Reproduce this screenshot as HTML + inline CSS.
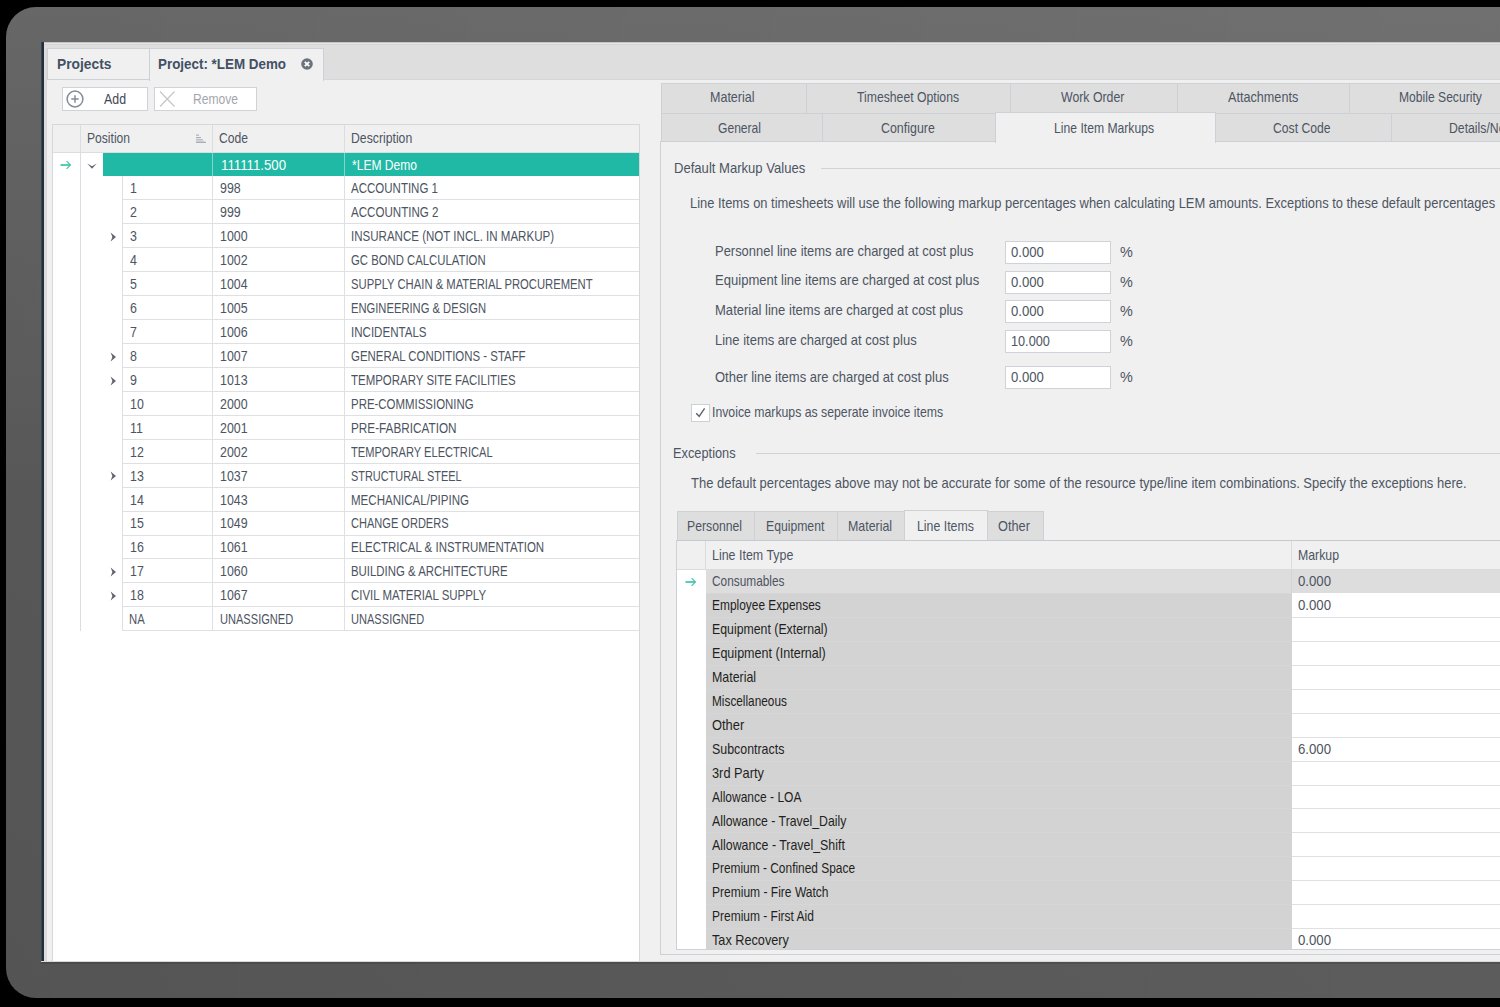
<!DOCTYPE html>
<html><head><meta charset="utf-8"><style>
html,body{margin:0;padding:0;}
body{width:1500px;height:1007px;overflow:hidden;background:#000;position:relative;font-family:"Liberation Sans",sans-serif;}
body div{position:absolute;box-sizing:border-box;}
.t{white-space:pre;line-height:15px;font-size:13px;}
</style></head><body>

<div style="left:6px;top:7px;width:1600px;height:991px;border-radius:30px;background:linear-gradient(to bottom,#717171 0%,#606060 50%,#5d5d5d 100%);"></div>
<div style="left:6px;top:7px;width:1600px;height:991px;border-radius:30px;background:linear-gradient(to right,rgba(0,0,0,0.095),rgba(0,0,0,0) 100%);"></div>
<div style="left:41px;top:42px;width:1459px;height:919px;background:#f0f0f0;"></div>
<div style="left:41px;top:42px;width:3px;height:919px;background:#262e3a;"></div>
<div style="left:41px;top:42px;width:1px;height:919px;background:#34465a;"></div>
<div style="left:41px;top:961px;width:1459px;height:1px;background:#d9d9d9;"></div>
<div style="left:41px;top:962px;width:1459px;height:2px;background:rgba(0,0,0,0.12);"></div>
<div style="left:44px;top:42px;width:1456px;height:6px;background:#dedede;"></div>
<div style="left:44px;top:42px;width:1456px;height:1px;background:#c4c4c4;"></div>
<div style="left:44px;top:43px;width:1456px;height:1px;background:#e6e6e6;"></div>
<div style="left:44px;top:44px;width:1456px;height:1px;background:#d3d5d9;"></div>
<div style="left:44px;top:48px;width:3px;height:913px;background:#dcdcdc;"></div>
<div style="left:46px;top:48px;width:1px;height:913px;background:#d8d9dc;"></div>
<div style="left:47px;top:48px;width:1453px;height:32px;background:#dedede;"></div>
<div style="left:47px;top:79px;width:1453px;height:1px;background:#d3d6da;"></div>
<div style="left:47px;top:48px;width:103px;height:32px;background:#f0f0f0;border:1px solid #cdd0d5;"></div>
<div style="left:149px;top:48px;width:175px;height:33px;background:#f0f0f0;border:1px solid #cdd0d5;border-bottom:none;"></div>
<div class="t" style="left:57.00px;top:57px;color:#435064;font-size:13.75px;font-weight:bold;transform:scaleX(1.0049);transform-origin:0 0;">Projects</div>
<div class="t" style="left:158.00px;top:57px;color:#435064;font-size:13.75px;font-weight:bold;transform:scaleX(0.9743);transform-origin:0 0;">Project: *LEM Demo</div>
<svg style="position:absolute;left:301px;top:58px" width="12" height="12" viewBox="0 0 12 12"><circle cx="6" cy="6" r="5.8" fill="#6c737d"/><path d="M3.8 3.8L8.2 8.2M8.2 3.8L3.8 8.2" stroke="#fff" stroke-width="1.8"/></svg>
<div style="left:62px;top:87px;width:86px;height:24px;background:#fff;border:1px solid #cfd2d7;"></div>
<svg style="position:absolute;left:66px;top:90px" width="18" height="18" viewBox="0 0 18 18"><circle cx="9" cy="9" r="7.9" fill="none" stroke="#848b97" stroke-width="1.5"/><path d="M5.3 9H12.7M9 5.3V12.7" stroke="#848b97" stroke-width="1.5"/></svg>
<div class="t" style="left:104.00px;top:92px;color:#3f4756;font-size:13.75px;font-weight:normal;transform:scaleX(0.8997);transform-origin:0 0;">Add</div>
<div style="left:154px;top:87px;width:103px;height:24px;background:#fff;border:1px solid #cfd2d7;"></div>
<svg style="position:absolute;left:159px;top:91px" width="16" height="16" viewBox="0 0 16 16"><path d="M1 0.5L15.5 15.5M15.5 0.5L1 15.5" stroke="#c4c4c4" stroke-width="1.1"/></svg>
<div class="t" style="left:192.50px;top:92px;color:#a3a6ae;font-size:13.75px;font-weight:normal;transform:scaleX(0.8791);transform-origin:0 0;">Remove</div>
<div style="left:52px;top:124px;width:588px;height:837px;background:#fff;border-left:1px solid #d5d7da;border-top:1px solid #d5d7da;border-right:1px solid #d5d7da;"></div>
<div style="left:53px;top:125px;width:586px;height:27px;background:#f0f0f0;"></div>
<div style="left:53px;top:152px;width:586px;height:1px;background:#dcdde0;"></div>
<div style="left:80px;top:125px;width:1px;height:28px;background:#dcdde0;"></div>
<div style="left:212px;top:125px;width:1px;height:28px;background:#dcdde0;"></div>
<div style="left:344px;top:125px;width:1px;height:28px;background:#dcdde0;"></div>
<div class="t" style="left:87.00px;top:131px;color:#4d5563;font-size:13.75px;font-weight:normal;transform:scaleX(0.8792);transform-origin:0 0;">Position</div>
<div class="t" style="left:219.00px;top:131px;color:#4d5563;font-size:13.75px;font-weight:normal;transform:scaleX(0.8825);transform-origin:0 0;">Code</div>
<div class="t" style="left:351.00px;top:131px;color:#4d5563;font-size:13.75px;font-weight:normal;transform:scaleX(0.89);transform-origin:0 0;">Description</div>
<svg style="position:absolute;left:196px;top:134px" width="11" height="10" viewBox="0 0 11 10"><rect x="0" y="0.5" width="3" height="1.2" fill="#a9aeb6"/><rect x="0" y="3" width="5" height="1.2" fill="#a9aeb6"/><rect x="0" y="5.3" width="7" height="1.2" fill="#a9aeb6"/><rect x="0" y="6.5" width="8" height="1.3" fill="#d3d5da"/><rect x="0" y="7.7" width="10" height="1.3" fill="#a9aeb6"/></svg>
<div style="left:80px;top:153px;width:1px;height:478px;background:#dcdde0;"></div>
<div style="left:103px;top:153px;width:536px;height:23px;background:#20b9a5;"></div>
<div style="left:212px;top:153px;width:1px;height:23px;background:#7fd6ca;"></div>
<div style="left:344px;top:153px;width:1px;height:23px;background:#7fd6ca;"></div>
<div class="t" style="left:220.50px;top:158px;color:#ffffff;font-size:13.75px;font-weight:normal;transform:scaleX(0.963);transform-origin:0 0;">111111.500</div>
<div class="t" style="left:352.00px;top:158px;color:#ffffff;font-size:13.75px;font-weight:normal;transform:scaleX(0.8773);transform-origin:0 0;">*LEM Demo</div>
<svg style="position:absolute;left:60px;top:160px" width="12" height="10" viewBox="0 0 12 10"><path d="M0.5 5H10.3" fill="none" stroke="#33bea5" stroke-width="1.6"/><path d="M6.6 1.2L10.4 5L6.6 8.8" fill="none" stroke="#45c4ad" stroke-width="1.2"/></svg>
<svg style="position:absolute;left:87px;top:163px" width="10" height="7" viewBox="0 0 10 7"><path d="M0.3 0.5L5 5.8L9.7 0.5L5 3.2Z" fill="#5f6570"/></svg>
<div style="left:123px;top:199px;width:516px;height:1px;background:#dfe0e3;"></div>
<div style="left:122px;top:176px;width:1px;height:24px;background:#dfe0e3;"></div>
<div style="left:212px;top:176px;width:1px;height:24px;background:#dfe0e3;"></div>
<div style="left:344px;top:176px;width:1px;height:24px;background:#dfe0e3;"></div>
<div class="t" style="left:130.00px;top:181px;color:#4d5461;font-size:13.75px;font-weight:normal;transform:scaleX(0.9);transform-origin:0 0;">1</div>
<div class="t" style="left:219.50px;top:181px;color:#4d5461;font-size:13.75px;font-weight:normal;transform:scaleX(0.9);transform-origin:0 0;">998</div>
<div class="t" style="left:351.40px;top:181px;color:#4d5461;font-size:13.75px;font-weight:normal;transform:scaleX(0.8373);transform-origin:0 0;">ACCOUNTING 1</div>
<div style="left:123px;top:223px;width:516px;height:1px;background:#dfe0e3;"></div>
<div style="left:122px;top:200px;width:1px;height:24px;background:#dfe0e3;"></div>
<div style="left:212px;top:200px;width:1px;height:24px;background:#dfe0e3;"></div>
<div style="left:344px;top:200px;width:1px;height:24px;background:#dfe0e3;"></div>
<div class="t" style="left:130.00px;top:205px;color:#4d5461;font-size:13.75px;font-weight:normal;transform:scaleX(0.9);transform-origin:0 0;">2</div>
<div class="t" style="left:219.50px;top:205px;color:#4d5461;font-size:13.75px;font-weight:normal;transform:scaleX(0.9);transform-origin:0 0;">999</div>
<div class="t" style="left:351.40px;top:205px;color:#4d5461;font-size:13.75px;font-weight:normal;transform:scaleX(0.8421);transform-origin:0 0;">ACCOUNTING 2</div>
<div style="left:123px;top:247px;width:516px;height:1px;background:#dfe0e3;"></div>
<div style="left:122px;top:224px;width:1px;height:24px;background:#dfe0e3;"></div>
<div style="left:212px;top:224px;width:1px;height:24px;background:#dfe0e3;"></div>
<div style="left:344px;top:224px;width:1px;height:24px;background:#dfe0e3;"></div>
<div class="t" style="left:130.00px;top:229px;color:#4d5461;font-size:13.75px;font-weight:normal;transform:scaleX(0.9);transform-origin:0 0;">3</div>
<div class="t" style="left:219.50px;top:229px;color:#4d5461;font-size:13.75px;font-weight:normal;transform:scaleX(0.9);transform-origin:0 0;">1000</div>
<div class="t" style="left:351.40px;top:229px;color:#4d5461;font-size:13.75px;font-weight:normal;transform:scaleX(0.8391);transform-origin:0 0;">INSURANCE (NOT INCL. IN MARKUP)</div>
<svg style="position:absolute;left:110px;top:232px" width="7" height="10" viewBox="0 0 7 10"><path d="M0.6 0.6L6 5L0.6 9.4L2.4 5Z" fill="#5f6670"/></svg>
<div style="left:123px;top:271px;width:516px;height:1px;background:#dfe0e3;"></div>
<div style="left:122px;top:248px;width:1px;height:24px;background:#dfe0e3;"></div>
<div style="left:212px;top:248px;width:1px;height:24px;background:#dfe0e3;"></div>
<div style="left:344px;top:248px;width:1px;height:24px;background:#dfe0e3;"></div>
<div class="t" style="left:130.00px;top:253px;color:#4d5461;font-size:13.75px;font-weight:normal;transform:scaleX(0.9);transform-origin:0 0;">4</div>
<div class="t" style="left:219.50px;top:253px;color:#4d5461;font-size:13.75px;font-weight:normal;transform:scaleX(0.9);transform-origin:0 0;">1002</div>
<div class="t" style="left:351.40px;top:253px;color:#4d5461;font-size:13.75px;font-weight:normal;transform:scaleX(0.8245);transform-origin:0 0;">GC BOND CALCULATION</div>
<div style="left:123px;top:295px;width:516px;height:1px;background:#dfe0e3;"></div>
<div style="left:122px;top:272px;width:1px;height:24px;background:#dfe0e3;"></div>
<div style="left:212px;top:272px;width:1px;height:24px;background:#dfe0e3;"></div>
<div style="left:344px;top:272px;width:1px;height:24px;background:#dfe0e3;"></div>
<div class="t" style="left:130.00px;top:277px;color:#4d5461;font-size:13.75px;font-weight:normal;transform:scaleX(0.9);transform-origin:0 0;">5</div>
<div class="t" style="left:219.50px;top:277px;color:#4d5461;font-size:13.75px;font-weight:normal;transform:scaleX(0.9);transform-origin:0 0;">1004</div>
<div class="t" style="left:351.40px;top:277px;color:#4d5461;font-size:13.75px;font-weight:normal;transform:scaleX(0.8184);transform-origin:0 0;">SUPPLY CHAIN &amp; MATERIAL PROCUREMENT</div>
<div style="left:123px;top:319px;width:516px;height:1px;background:#dfe0e3;"></div>
<div style="left:122px;top:296px;width:1px;height:24px;background:#dfe0e3;"></div>
<div style="left:212px;top:296px;width:1px;height:24px;background:#dfe0e3;"></div>
<div style="left:344px;top:296px;width:1px;height:24px;background:#dfe0e3;"></div>
<div class="t" style="left:130.00px;top:301px;color:#4d5461;font-size:13.75px;font-weight:normal;transform:scaleX(0.9);transform-origin:0 0;">6</div>
<div class="t" style="left:219.50px;top:301px;color:#4d5461;font-size:13.75px;font-weight:normal;transform:scaleX(0.9);transform-origin:0 0;">1005</div>
<div class="t" style="left:351.40px;top:301px;color:#4d5461;font-size:13.75px;font-weight:normal;transform:scaleX(0.8143);transform-origin:0 0;">ENGINEERING &amp; DESIGN</div>
<div style="left:123px;top:343px;width:516px;height:1px;background:#dfe0e3;"></div>
<div style="left:122px;top:320px;width:1px;height:24px;background:#dfe0e3;"></div>
<div style="left:212px;top:320px;width:1px;height:24px;background:#dfe0e3;"></div>
<div style="left:344px;top:320px;width:1px;height:24px;background:#dfe0e3;"></div>
<div class="t" style="left:130.00px;top:325px;color:#4d5461;font-size:13.75px;font-weight:normal;transform:scaleX(0.9);transform-origin:0 0;">7</div>
<div class="t" style="left:219.50px;top:325px;color:#4d5461;font-size:13.75px;font-weight:normal;transform:scaleX(0.9);transform-origin:0 0;">1006</div>
<div class="t" style="left:351.40px;top:325px;color:#4d5461;font-size:13.75px;font-weight:normal;transform:scaleX(0.8407);transform-origin:0 0;">INCIDENTALS</div>
<div style="left:123px;top:367px;width:516px;height:1px;background:#dfe0e3;"></div>
<div style="left:122px;top:344px;width:1px;height:24px;background:#dfe0e3;"></div>
<div style="left:212px;top:344px;width:1px;height:24px;background:#dfe0e3;"></div>
<div style="left:344px;top:344px;width:1px;height:24px;background:#dfe0e3;"></div>
<div class="t" style="left:130.00px;top:349px;color:#4d5461;font-size:13.75px;font-weight:normal;transform:scaleX(0.9);transform-origin:0 0;">8</div>
<div class="t" style="left:219.50px;top:349px;color:#4d5461;font-size:13.75px;font-weight:normal;transform:scaleX(0.9);transform-origin:0 0;">1007</div>
<div class="t" style="left:351.40px;top:349px;color:#4d5461;font-size:13.75px;font-weight:normal;transform:scaleX(0.8311);transform-origin:0 0;">GENERAL CONDITIONS - STAFF</div>
<svg style="position:absolute;left:110px;top:352px" width="7" height="10" viewBox="0 0 7 10"><path d="M0.6 0.6L6 5L0.6 9.4L2.4 5Z" fill="#5f6670"/></svg>
<div style="left:123px;top:391px;width:516px;height:1px;background:#dfe0e3;"></div>
<div style="left:122px;top:368px;width:1px;height:24px;background:#dfe0e3;"></div>
<div style="left:212px;top:368px;width:1px;height:24px;background:#dfe0e3;"></div>
<div style="left:344px;top:368px;width:1px;height:24px;background:#dfe0e3;"></div>
<div class="t" style="left:130.00px;top:373px;color:#4d5461;font-size:13.75px;font-weight:normal;transform:scaleX(0.9);transform-origin:0 0;">9</div>
<div class="t" style="left:219.50px;top:373px;color:#4d5461;font-size:13.75px;font-weight:normal;transform:scaleX(0.9);transform-origin:0 0;">1013</div>
<div class="t" style="left:351.40px;top:373px;color:#4d5461;font-size:13.75px;font-weight:normal;transform:scaleX(0.8339);transform-origin:0 0;">TEMPORARY SITE FACILITIES</div>
<svg style="position:absolute;left:110px;top:376px" width="7" height="10" viewBox="0 0 7 10"><path d="M0.6 0.6L6 5L0.6 9.4L2.4 5Z" fill="#5f6670"/></svg>
<div style="left:123px;top:415px;width:516px;height:1px;background:#dfe0e3;"></div>
<div style="left:122px;top:391px;width:1px;height:25px;background:#dfe0e3;"></div>
<div style="left:212px;top:391px;width:1px;height:25px;background:#dfe0e3;"></div>
<div style="left:344px;top:391px;width:1px;height:25px;background:#dfe0e3;"></div>
<div class="t" style="left:130.00px;top:397px;color:#4d5461;font-size:13.75px;font-weight:normal;transform:scaleX(0.9);transform-origin:0 0;">10</div>
<div class="t" style="left:219.50px;top:397px;color:#4d5461;font-size:13.75px;font-weight:normal;transform:scaleX(0.9);transform-origin:0 0;">2000</div>
<div class="t" style="left:351.40px;top:397px;color:#4d5461;font-size:13.75px;font-weight:normal;transform:scaleX(0.8316);transform-origin:0 0;">PRE-COMMISSIONING</div>
<div style="left:123px;top:439px;width:516px;height:1px;background:#dfe0e3;"></div>
<div style="left:122px;top:415px;width:1px;height:25px;background:#dfe0e3;"></div>
<div style="left:212px;top:415px;width:1px;height:25px;background:#dfe0e3;"></div>
<div style="left:344px;top:415px;width:1px;height:25px;background:#dfe0e3;"></div>
<div class="t" style="left:130.00px;top:421px;color:#4d5461;font-size:13.75px;font-weight:normal;transform:scaleX(0.9);transform-origin:0 0;">11</div>
<div class="t" style="left:219.50px;top:421px;color:#4d5461;font-size:13.75px;font-weight:normal;transform:scaleX(0.9);transform-origin:0 0;">2001</div>
<div class="t" style="left:351.40px;top:421px;color:#4d5461;font-size:13.75px;font-weight:normal;transform:scaleX(0.8548);transform-origin:0 0;">PRE-FABRICATION</div>
<div style="left:123px;top:463px;width:516px;height:1px;background:#dfe0e3;"></div>
<div style="left:122px;top:439px;width:1px;height:25px;background:#dfe0e3;"></div>
<div style="left:212px;top:439px;width:1px;height:25px;background:#dfe0e3;"></div>
<div style="left:344px;top:439px;width:1px;height:25px;background:#dfe0e3;"></div>
<div class="t" style="left:130.00px;top:445px;color:#4d5461;font-size:13.75px;font-weight:normal;transform:scaleX(0.9);transform-origin:0 0;">12</div>
<div class="t" style="left:219.50px;top:445px;color:#4d5461;font-size:13.75px;font-weight:normal;transform:scaleX(0.9);transform-origin:0 0;">2002</div>
<div class="t" style="left:351.40px;top:445px;color:#4d5461;font-size:13.75px;font-weight:normal;transform:scaleX(0.808);transform-origin:0 0;">TEMPORARY ELECTRICAL</div>
<div style="left:123px;top:487px;width:516px;height:1px;background:#dfe0e3;"></div>
<div style="left:122px;top:463px;width:1px;height:25px;background:#dfe0e3;"></div>
<div style="left:212px;top:463px;width:1px;height:25px;background:#dfe0e3;"></div>
<div style="left:344px;top:463px;width:1px;height:25px;background:#dfe0e3;"></div>
<div class="t" style="left:130.00px;top:469px;color:#4d5461;font-size:13.75px;font-weight:normal;transform:scaleX(0.9);transform-origin:0 0;">13</div>
<div class="t" style="left:219.50px;top:469px;color:#4d5461;font-size:13.75px;font-weight:normal;transform:scaleX(0.9);transform-origin:0 0;">1037</div>
<div class="t" style="left:351.40px;top:469px;color:#4d5461;font-size:13.75px;font-weight:normal;transform:scaleX(0.7937);transform-origin:0 0;">STRUCTURAL STEEL</div>
<svg style="position:absolute;left:110px;top:471px" width="7" height="10" viewBox="0 0 7 10"><path d="M0.6 0.6L6 5L0.6 9.4L2.4 5Z" fill="#5f6670"/></svg>
<div style="left:123px;top:511px;width:516px;height:1px;background:#dfe0e3;"></div>
<div style="left:122px;top:487px;width:1px;height:25px;background:#dfe0e3;"></div>
<div style="left:212px;top:487px;width:1px;height:25px;background:#dfe0e3;"></div>
<div style="left:344px;top:487px;width:1px;height:25px;background:#dfe0e3;"></div>
<div class="t" style="left:130.00px;top:493px;color:#4d5461;font-size:13.75px;font-weight:normal;transform:scaleX(0.9);transform-origin:0 0;">14</div>
<div class="t" style="left:219.50px;top:493px;color:#4d5461;font-size:13.75px;font-weight:normal;transform:scaleX(0.9);transform-origin:0 0;">1043</div>
<div class="t" style="left:351.40px;top:493px;color:#4d5461;font-size:13.75px;font-weight:normal;transform:scaleX(0.8394);transform-origin:0 0;">MECHANICAL/PIPING</div>
<div style="left:123px;top:535px;width:516px;height:1px;background:#dfe0e3;"></div>
<div style="left:122px;top:511px;width:1px;height:25px;background:#dfe0e3;"></div>
<div style="left:212px;top:511px;width:1px;height:25px;background:#dfe0e3;"></div>
<div style="left:344px;top:511px;width:1px;height:25px;background:#dfe0e3;"></div>
<div class="t" style="left:130.00px;top:516px;color:#4d5461;font-size:13.75px;font-weight:normal;transform:scaleX(0.9);transform-origin:0 0;">15</div>
<div class="t" style="left:219.50px;top:516px;color:#4d5461;font-size:13.75px;font-weight:normal;transform:scaleX(0.9);transform-origin:0 0;">1049</div>
<div class="t" style="left:351.40px;top:516px;color:#4d5461;font-size:13.75px;font-weight:normal;transform:scaleX(0.8033);transform-origin:0 0;">CHANGE ORDERS</div>
<div style="left:123px;top:558px;width:516px;height:1px;background:#dfe0e3;"></div>
<div style="left:122px;top:535px;width:1px;height:24px;background:#dfe0e3;"></div>
<div style="left:212px;top:535px;width:1px;height:24px;background:#dfe0e3;"></div>
<div style="left:344px;top:535px;width:1px;height:24px;background:#dfe0e3;"></div>
<div class="t" style="left:130.00px;top:540px;color:#4d5461;font-size:13.75px;font-weight:normal;transform:scaleX(0.9);transform-origin:0 0;">16</div>
<div class="t" style="left:219.50px;top:540px;color:#4d5461;font-size:13.75px;font-weight:normal;transform:scaleX(0.9);transform-origin:0 0;">1061</div>
<div class="t" style="left:351.40px;top:540px;color:#4d5461;font-size:13.75px;font-weight:normal;transform:scaleX(0.8354);transform-origin:0 0;">ELECTRICAL &amp; INSTRUMENTATION</div>
<div style="left:123px;top:582px;width:516px;height:1px;background:#dfe0e3;"></div>
<div style="left:122px;top:559px;width:1px;height:24px;background:#dfe0e3;"></div>
<div style="left:212px;top:559px;width:1px;height:24px;background:#dfe0e3;"></div>
<div style="left:344px;top:559px;width:1px;height:24px;background:#dfe0e3;"></div>
<div class="t" style="left:130.00px;top:564px;color:#4d5461;font-size:13.75px;font-weight:normal;transform:scaleX(0.9);transform-origin:0 0;">17</div>
<div class="t" style="left:219.50px;top:564px;color:#4d5461;font-size:13.75px;font-weight:normal;transform:scaleX(0.9);transform-origin:0 0;">1060</div>
<div class="t" style="left:351.40px;top:564px;color:#4d5461;font-size:13.75px;font-weight:normal;transform:scaleX(0.8297);transform-origin:0 0;">BUILDING &amp; ARCHITECTURE</div>
<svg style="position:absolute;left:110px;top:567px" width="7" height="10" viewBox="0 0 7 10"><path d="M0.6 0.6L6 5L0.6 9.4L2.4 5Z" fill="#5f6670"/></svg>
<div style="left:123px;top:606px;width:516px;height:1px;background:#dfe0e3;"></div>
<div style="left:122px;top:583px;width:1px;height:24px;background:#dfe0e3;"></div>
<div style="left:212px;top:583px;width:1px;height:24px;background:#dfe0e3;"></div>
<div style="left:344px;top:583px;width:1px;height:24px;background:#dfe0e3;"></div>
<div class="t" style="left:130.00px;top:588px;color:#4d5461;font-size:13.75px;font-weight:normal;transform:scaleX(0.9);transform-origin:0 0;">18</div>
<div class="t" style="left:219.50px;top:588px;color:#4d5461;font-size:13.75px;font-weight:normal;transform:scaleX(0.9);transform-origin:0 0;">1067</div>
<div class="t" style="left:351.40px;top:588px;color:#4d5461;font-size:13.75px;font-weight:normal;transform:scaleX(0.8335);transform-origin:0 0;">CIVIL MATERIAL SUPPLY</div>
<svg style="position:absolute;left:110px;top:591px" width="7" height="10" viewBox="0 0 7 10"><path d="M0.6 0.6L6 5L0.6 9.4L2.4 5Z" fill="#5f6670"/></svg>
<div style="left:123px;top:630px;width:516px;height:1px;background:#dfe0e3;"></div>
<div style="left:122px;top:607px;width:1px;height:24px;background:#dfe0e3;"></div>
<div style="left:212px;top:607px;width:1px;height:24px;background:#dfe0e3;"></div>
<div style="left:344px;top:607px;width:1px;height:24px;background:#dfe0e3;"></div>
<div class="t" style="left:129.00px;top:612px;color:#4d5461;font-size:13.75px;font-weight:normal;transform:scaleX(0.82);transform-origin:0 0;">NA</div>
<div class="t" style="left:219.50px;top:612px;color:#4d5461;font-size:13.75px;font-weight:normal;transform:scaleX(0.8049);transform-origin:0 0;">UNASSIGNED</div>
<div class="t" style="left:351.40px;top:612px;color:#4d5461;font-size:13.75px;font-weight:normal;transform:scaleX(0.8049);transform-origin:0 0;">UNASSIGNED</div>
<div style="left:660px;top:141px;width:840px;height:814px;background:#f0f0f0;border-left:1px solid #cdd0d5;border-bottom:1px solid #cdd0d5;border-top:1px solid #cdd0d5;"></div>
<div style="left:661px;top:83px;width:146px;height:31px;background:#dedede;border:1px solid #cdd0d5;"></div>
<div class="t" style="left:710.05px;top:90px;color:#4d5563;font-size:13.75px;font-weight:normal;transform:scaleX(0.9102);transform-origin:0 0;">Material</div>
<div style="left:806px;top:83px;width:205px;height:31px;background:#dedede;border:1px solid #cdd0d5;"></div>
<div class="t" style="left:856.90px;top:90px;color:#4d5563;font-size:13.75px;font-weight:normal;transform:scaleX(0.8883);transform-origin:0 0;">Timesheet Options</div>
<div style="left:1010px;top:83px;width:168px;height:31px;background:#dedede;border:1px solid #cdd0d5;"></div>
<div class="t" style="left:1061.00px;top:90px;color:#4d5563;font-size:13.75px;font-weight:normal;transform:scaleX(0.8959);transform-origin:0 0;">Work Order</div>
<div style="left:1177px;top:83px;width:173px;height:31px;background:#dedede;border:1px solid #cdd0d5;"></div>
<div class="t" style="left:1227.50px;top:90px;color:#4d5563;font-size:13.75px;font-weight:normal;transform:scaleX(0.9191);transform-origin:0 0;">Attachments</div>
<div style="left:1349px;top:83px;width:183px;height:31px;background:#dedede;border:1px solid #cdd0d5;"></div>
<div class="t" style="left:1399.20px;top:90px;color:#4d5563;font-size:13.75px;font-weight:normal;transform:scaleX(0.8811);transform-origin:0 0;">Mobile Security</div>
<div style="left:661px;top:113px;width:162px;height:29px;background:#dedede;border:1px solid #cdd0d5;"></div>
<div class="t" style="left:718.40px;top:121px;color:#4d5563;font-size:13.75px;font-weight:normal;transform:scaleX(0.8795);transform-origin:0 0;">General</div>
<div style="left:822px;top:113px;width:174px;height:29px;background:#dedede;border:1px solid #cdd0d5;"></div>
<div class="t" style="left:880.70px;top:121px;color:#4d5563;font-size:13.75px;font-weight:normal;transform:scaleX(0.9028);transform-origin:0 0;">Configure</div>
<div style="left:1215px;top:113px;width:177px;height:29px;background:#dedede;border:1px solid #cdd0d5;"></div>
<div class="t" style="left:1272.90px;top:121px;color:#4d5563;font-size:13.75px;font-weight:normal;transform:scaleX(0.887);transform-origin:0 0;">Cost Code</div>
<div style="left:1391px;top:113px;width:180px;height:29px;background:#dedede;border:1px solid #cdd0d5;"></div>
<div class="t" style="left:1449.00px;top:121px;color:#4d5563;font-size:13.75px;font-weight:normal;transform:scaleX(0.89);transform-origin:0 0;">Details/Notes</div>
<div style="left:995px;top:112px;width:221px;height:31px;background:#f0f0f0;border:1px solid #cdd0d5;border-bottom:none;"></div>
<div class="t" style="left:1053.80px;top:121px;color:#4d5563;font-size:13.75px;font-weight:normal;transform:scaleX(0.8847);transform-origin:0 0;">Line Item Markups</div>
<div class="t" style="left:674.40px;top:161px;color:#4d5563;font-size:13.75px;font-weight:normal;transform:scaleX(0.9506);transform-origin:0 0;">Default Markup Values</div>
<div style="left:821px;top:168px;width:679px;height:1px;background:#cfd2d7;"></div>
<div class="t" style="left:690.30px;top:196px;color:#4d5563;font-size:13.75px;font-weight:normal;transform:scaleX(0.9388);transform-origin:0 0;">Line Items on timesheets will use the following markup percentages when calculating LEM amounts. Exceptions to these default percentages</div>
<div class="t" style="left:1499.50px;top:196px;color:#4d5563;font-size:13.75px;font-weight:normal;transform:scaleX(0.89);transform-origin:0 0;">are</div>
<div class="t" style="left:715.30px;top:244px;color:#4d5563;font-size:13.75px;font-weight:normal;transform:scaleX(0.9416);transform-origin:0 0;">Personnel line items are charged at cost plus</div>
<div style="left:1005px;top:241px;width:106px;height:23px;background:#fff;border:1px solid #cfd2d7;"></div>
<div class="t" style="left:1010.50px;top:245px;color:#4d5563;font-size:13.75px;font-weight:normal;transform:scaleX(0.9542);transform-origin:0 0;">0.000</div>
<div class="t" style="left:1119.50px;top:245px;color:#4d5563;font-size:13.75px;font-weight:normal;transform:scaleX(1.0476);transform-origin:0 0;">%</div>
<div class="t" style="left:715.30px;top:273px;color:#4d5563;font-size:13.75px;font-weight:normal;transform:scaleX(0.9495);transform-origin:0 0;">Equipment line items are charged at cost plus</div>
<div style="left:1005px;top:271px;width:106px;height:23px;background:#fff;border:1px solid #cfd2d7;"></div>
<div class="t" style="left:1010.50px;top:275px;color:#4d5563;font-size:13.75px;font-weight:normal;transform:scaleX(0.9542);transform-origin:0 0;">0.000</div>
<div class="t" style="left:1119.50px;top:275px;color:#4d5563;font-size:13.75px;font-weight:normal;transform:scaleX(1.0476);transform-origin:0 0;">%</div>
<div class="t" style="left:715.30px;top:303px;color:#4d5563;font-size:13.75px;font-weight:normal;transform:scaleX(0.9494);transform-origin:0 0;">Material line items are charged at cost plus</div>
<div style="left:1005px;top:300px;width:106px;height:23px;background:#fff;border:1px solid #cfd2d7;"></div>
<div class="t" style="left:1010.50px;top:304px;color:#4d5563;font-size:13.75px;font-weight:normal;transform:scaleX(0.9542);transform-origin:0 0;">0.000</div>
<div class="t" style="left:1119.50px;top:304px;color:#4d5563;font-size:13.75px;font-weight:normal;transform:scaleX(1.0476);transform-origin:0 0;">%</div>
<div class="t" style="left:715.30px;top:333px;color:#4d5563;font-size:13.75px;font-weight:normal;transform:scaleX(0.9456);transform-origin:0 0;">Line items are charged at cost plus</div>
<div style="left:1005px;top:330px;width:106px;height:23px;background:#fff;border:1px solid #cfd2d7;"></div>
<div class="t" style="left:1010.50px;top:334px;color:#4d5563;font-size:13.75px;font-weight:normal;transform:scaleX(0.9235);transform-origin:0 0;">10.000</div>
<div class="t" style="left:1119.50px;top:334px;color:#4d5563;font-size:13.75px;font-weight:normal;transform:scaleX(1.0476);transform-origin:0 0;">%</div>
<div class="t" style="left:715.30px;top:370px;color:#4d5563;font-size:13.75px;font-weight:normal;transform:scaleX(0.9465);transform-origin:0 0;">Other line items are charged at cost plus</div>
<div style="left:1005px;top:366px;width:106px;height:23px;background:#fff;border:1px solid #cfd2d7;"></div>
<div class="t" style="left:1010.50px;top:370px;color:#4d5563;font-size:13.75px;font-weight:normal;transform:scaleX(0.9542);transform-origin:0 0;">0.000</div>
<div class="t" style="left:1119.50px;top:370px;color:#4d5563;font-size:13.75px;font-weight:normal;transform:scaleX(1.0476);transform-origin:0 0;">%</div>
<div style="left:691px;top:404px;width:19px;height:18px;background:#fff;border:1px solid #cdd0d5;"></div>
<svg style="position:absolute;left:694px;top:406px" width="13" height="13" viewBox="0 0 13 13"><path d="M2.2 7.2L5.2 10.3L10.6 2.4" fill="none" stroke="#5b616b" stroke-width="1.4"/></svg>
<div class="t" style="left:712.40px;top:405px;color:#4d5563;font-size:13.75px;font-weight:normal;transform:scaleX(0.8921);transform-origin:0 0;">Invoice markups as seperate invoice items</div>
<div class="t" style="left:673.40px;top:446px;color:#4d5563;font-size:13.75px;font-weight:normal;transform:scaleX(0.9311);transform-origin:0 0;">Exceptions</div>
<div style="left:756px;top:453px;width:744px;height:1px;background:#cfd2d7;"></div>
<div class="t" style="left:691.00px;top:476px;color:#4d5563;font-size:13.75px;font-weight:normal;transform:scaleX(0.9448);transform-origin:0 0;">The default percentages above may not be accurate for some of the resource type/line item combinations. Specify the exceptions here.</div>
<div style="left:676px;top:540px;width:824px;height:1px;background:#c6c9ce;"></div>
<div style="left:677px;top:511px;width:78px;height:30px;background:#dedede;border:1px solid #cdd0d5;"></div>
<div class="t" style="left:687.20px;top:519px;color:#4d5563;font-size:13.75px;font-weight:normal;transform:scaleX(0.8887);transform-origin:0 0;">Personnel</div>
<div style="left:754px;top:511px;width:84px;height:30px;background:#dedede;border:1px solid #cdd0d5;"></div>
<div class="t" style="left:765.70px;top:519px;color:#4d5563;font-size:13.75px;font-weight:normal;transform:scaleX(0.8873);transform-origin:0 0;">Equipment</div>
<div style="left:837px;top:511px;width:68px;height:30px;background:#dedede;border:1px solid #cdd0d5;"></div>
<div class="t" style="left:848.30px;top:519px;color:#4d5563;font-size:13.75px;font-weight:normal;transform:scaleX(0.902);transform-origin:0 0;">Material</div>
<div style="left:987px;top:511px;width:57px;height:30px;background:#dedede;border:1px solid #cdd0d5;"></div>
<div class="t" style="left:997.80px;top:519px;color:#4d5563;font-size:13.75px;font-weight:normal;transform:scaleX(0.9284);transform-origin:0 0;">Other</div>
<div style="left:904px;top:510px;width:84px;height:31px;background:#f0f0f0;border:1px solid #cdd0d5;border-bottom:none;"></div>
<div class="t" style="left:916.70px;top:519px;color:#4d5563;font-size:13.75px;font-weight:normal;transform:scaleX(0.896);transform-origin:0 0;">Line Items</div>
<div style="left:676px;top:540px;width:824px;height:410px;background:#fff;border-left:1px solid #cdd0d5;border-top:1px solid #c6c9ce;border-bottom:1px solid #cdd0d5;"></div>
<div style="left:677px;top:541px;width:823px;height:28px;background:#f0f0f0;"></div>
<div style="left:677px;top:569px;width:823px;height:1px;background:#d9dbde;"></div>
<div style="left:705px;top:541px;width:1px;height:28px;background:#d9dbde;"></div>
<div style="left:1291px;top:541px;width:1px;height:28px;background:#d9dbde;"></div>
<div class="t" style="left:711.50px;top:548px;color:#4d5563;font-size:13.75px;font-weight:normal;transform:scaleX(0.9046);transform-origin:0 0;">Line Item Type</div>
<div class="t" style="left:1298.00px;top:548px;color:#4d5563;font-size:13.75px;font-weight:normal;transform:scaleX(0.8946);transform-origin:0 0;">Markup</div>
<div style="left:706px;top:570px;width:794px;height:23px;background:#dddddd;"></div>
<svg style="position:absolute;left:685px;top:577px" width="12" height="10" viewBox="0 0 12 10"><path d="M0.5 5H10.3" fill="none" stroke="#33bea5" stroke-width="1.6"/><path d="M6.6 1.2L10.4 5L6.6 8.8" fill="none" stroke="#45c4ad" stroke-width="1.2"/></svg>
<div class="t" style="left:711.50px;top:574px;color:#4d5461;font-size:13.75px;font-weight:normal;transform:scaleX(0.8626);transform-origin:0 0;">Consumables</div>
<div class="t" style="left:1298.00px;top:574px;color:#4d5461;font-size:13.75px;font-weight:normal;transform:scaleX(0.96);transform-origin:0 0;">0.000</div>
<div style="left:1291px;top:570px;width:1px;height:23px;background:#d2d4d7;"></div>
<div style="left:706px;top:593px;width:586px;height:24px;background:#d3d3d3;"></div>
<div style="left:706px;top:593px;width:586px;height:1px;background:#d6d6d6;"></div>
<div class="t" style="left:711.50px;top:598px;color:#1f1f22;font-size:13.75px;font-weight:normal;transform:scaleX(0.8675);transform-origin:0 0;">Employee Expenses</div>
<div class="t" style="left:1298.00px;top:598px;color:#4d5461;font-size:13.75px;font-weight:normal;transform:scaleX(0.96);transform-origin:0 0;">0.000</div>
<div style="left:706px;top:617px;width:586px;height:24px;background:#d3d3d3;"></div>
<div style="left:706px;top:617px;width:586px;height:1px;background:#d6d6d6;"></div>
<div style="left:1292px;top:617px;width:208px;height:1px;background:#dfe0e3;"></div>
<div class="t" style="left:711.50px;top:622px;color:#1f1f22;font-size:13.75px;font-weight:normal;transform:scaleX(0.8955);transform-origin:0 0;">Equipment (External)</div>
<div style="left:706px;top:641px;width:586px;height:24px;background:#d3d3d3;"></div>
<div style="left:706px;top:641px;width:586px;height:1px;background:#d6d6d6;"></div>
<div style="left:1292px;top:641px;width:208px;height:1px;background:#dfe0e3;"></div>
<div class="t" style="left:711.50px;top:646px;color:#1f1f22;font-size:13.75px;font-weight:normal;transform:scaleX(0.9133);transform-origin:0 0;">Equipment (Internal)</div>
<div style="left:706px;top:665px;width:586px;height:24px;background:#d3d3d3;"></div>
<div style="left:706px;top:665px;width:586px;height:1px;background:#d6d6d6;"></div>
<div style="left:1292px;top:665px;width:208px;height:1px;background:#dfe0e3;"></div>
<div class="t" style="left:711.50px;top:670px;color:#1f1f22;font-size:13.75px;font-weight:normal;transform:scaleX(0.902);transform-origin:0 0;">Material</div>
<div style="left:706px;top:689px;width:586px;height:24px;background:#d3d3d3;"></div>
<div style="left:706px;top:689px;width:586px;height:1px;background:#d6d6d6;"></div>
<div style="left:1292px;top:689px;width:208px;height:1px;background:#dfe0e3;"></div>
<div class="t" style="left:711.50px;top:694px;color:#1f1f22;font-size:13.75px;font-weight:normal;transform:scaleX(0.8598);transform-origin:0 0;">Miscellaneous</div>
<div style="left:706px;top:713px;width:586px;height:24px;background:#d3d3d3;"></div>
<div style="left:706px;top:713px;width:586px;height:1px;background:#d6d6d6;"></div>
<div style="left:1292px;top:713px;width:208px;height:1px;background:#dfe0e3;"></div>
<div class="t" style="left:711.50px;top:718px;color:#1f1f22;font-size:13.75px;font-weight:normal;transform:scaleX(0.9372);transform-origin:0 0;">Other</div>
<div style="left:706px;top:737px;width:586px;height:24px;background:#d3d3d3;"></div>
<div style="left:706px;top:737px;width:586px;height:1px;background:#d6d6d6;"></div>
<div style="left:1292px;top:737px;width:208px;height:1px;background:#dfe0e3;"></div>
<div class="t" style="left:711.50px;top:742px;color:#1f1f22;font-size:13.75px;font-weight:normal;transform:scaleX(0.9015);transform-origin:0 0;">Subcontracts</div>
<div class="t" style="left:1298.00px;top:742px;color:#4d5461;font-size:13.75px;font-weight:normal;transform:scaleX(0.96);transform-origin:0 0;">6.000</div>
<div style="left:706px;top:761px;width:586px;height:24px;background:#d3d3d3;"></div>
<div style="left:706px;top:761px;width:586px;height:1px;background:#d6d6d6;"></div>
<div style="left:1292px;top:761px;width:208px;height:1px;background:#dfe0e3;"></div>
<div class="t" style="left:711.50px;top:766px;color:#1f1f22;font-size:13.75px;font-weight:normal;transform:scaleX(0.9309);transform-origin:0 0;">3rd Party</div>
<div style="left:706px;top:785px;width:586px;height:23px;background:#d3d3d3;"></div>
<div style="left:706px;top:785px;width:586px;height:1px;background:#d6d6d6;"></div>
<div style="left:1292px;top:785px;width:208px;height:1px;background:#dfe0e3;"></div>
<div class="t" style="left:711.50px;top:790px;color:#1f1f22;font-size:13.75px;font-weight:normal;transform:scaleX(0.8733);transform-origin:0 0;">Allowance - LOA</div>
<div style="left:706px;top:808px;width:586px;height:24px;background:#d3d3d3;"></div>
<div style="left:706px;top:808px;width:586px;height:1px;background:#d6d6d6;"></div>
<div style="left:1292px;top:808px;width:208px;height:1px;background:#dfe0e3;"></div>
<div class="t" style="left:711.50px;top:814px;color:#1f1f22;font-size:13.75px;font-weight:normal;transform:scaleX(0.8922);transform-origin:0 0;">Allowance - Travel_Daily</div>
<div style="left:706px;top:832px;width:586px;height:24px;background:#d3d3d3;"></div>
<div style="left:706px;top:832px;width:586px;height:1px;background:#d6d6d6;"></div>
<div style="left:1292px;top:832px;width:208px;height:1px;background:#dfe0e3;"></div>
<div class="t" style="left:711.50px;top:838px;color:#1f1f22;font-size:13.75px;font-weight:normal;transform:scaleX(0.9006);transform-origin:0 0;">Allowance - Travel_Shift</div>
<div style="left:706px;top:856px;width:586px;height:24px;background:#d3d3d3;"></div>
<div style="left:706px;top:856px;width:586px;height:1px;background:#d6d6d6;"></div>
<div style="left:1292px;top:856px;width:208px;height:1px;background:#dfe0e3;"></div>
<div class="t" style="left:711.50px;top:861px;color:#1f1f22;font-size:13.75px;font-weight:normal;transform:scaleX(0.8667);transform-origin:0 0;">Premium - Confined Space</div>
<div style="left:706px;top:880px;width:586px;height:24px;background:#d3d3d3;"></div>
<div style="left:706px;top:880px;width:586px;height:1px;background:#d6d6d6;"></div>
<div style="left:1292px;top:880px;width:208px;height:1px;background:#dfe0e3;"></div>
<div class="t" style="left:711.50px;top:885px;color:#1f1f22;font-size:13.75px;font-weight:normal;transform:scaleX(0.875);transform-origin:0 0;">Premium - Fire Watch</div>
<div style="left:706px;top:904px;width:586px;height:24px;background:#d3d3d3;"></div>
<div style="left:706px;top:904px;width:586px;height:1px;background:#d6d6d6;"></div>
<div style="left:1292px;top:904px;width:208px;height:1px;background:#dfe0e3;"></div>
<div class="t" style="left:711.50px;top:909px;color:#1f1f22;font-size:13.75px;font-weight:normal;transform:scaleX(0.872);transform-origin:0 0;">Premium - First Aid</div>
<div style="left:706px;top:928px;width:586px;height:21px;background:#d3d3d3;"></div>
<div style="left:706px;top:928px;width:586px;height:1px;background:#d6d6d6;"></div>
<div style="left:1292px;top:928px;width:208px;height:1px;background:#dfe0e3;"></div>
<div class="t" style="left:711.50px;top:933px;color:#1f1f22;font-size:13.75px;font-weight:normal;transform:scaleX(0.9236);transform-origin:0 0;">Tax Recovery</div>
<div class="t" style="left:1298.00px;top:933px;color:#4d5461;font-size:13.75px;font-weight:normal;transform:scaleX(0.96);transform-origin:0 0;">0.000</div>
<!--BODY-->
</body></html>
